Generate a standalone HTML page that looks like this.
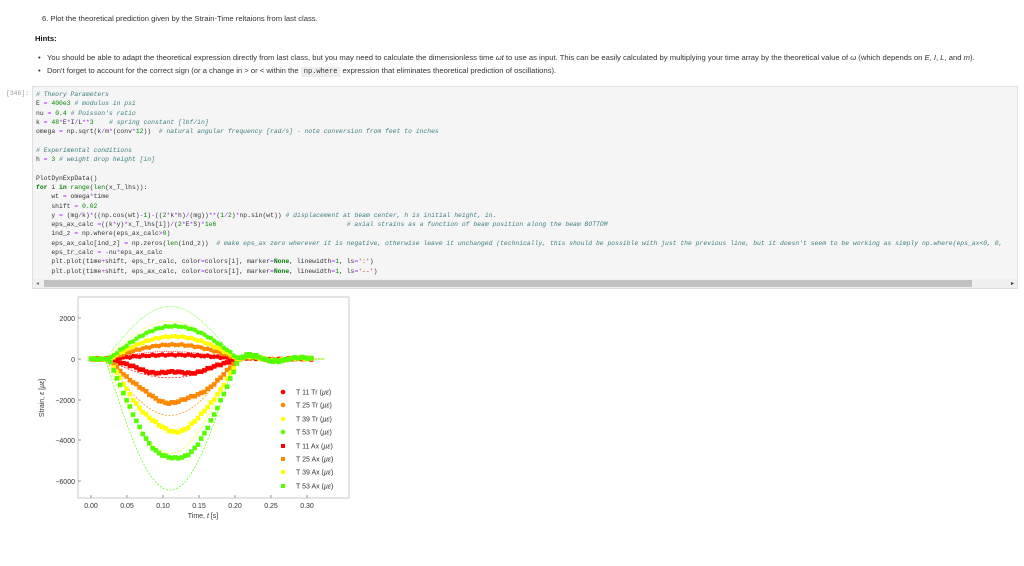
<!DOCTYPE html>
<html><head><meta charset="utf-8">
<style>
body{margin:0;width:1024px;height:566px;background:#fff;position:relative;overflow:hidden;font-family:"Liberation Sans",sans-serif;color:#222}
.t{position:absolute;font-size:7.65px;white-space:nowrap;color:#333}
.code{position:absolute;left:32px;top:86px;width:986px;height:203px;background:#f5f5f5;border:1px solid #e0e0e0;box-sizing:border-box}
pre{margin:0;position:absolute;left:3px;top:3px;font-family:"Liberation Mono",monospace;font-size:6.4px;line-height:9.3px;color:#333}
.c{color:#408080;font-style:italic}.k{color:#008000;font-weight:bold}.n{color:#080}.o{color:#a2f}.b{color:#008000}
.cd{background:#eee;font-family:"Liberation Mono",monospace;padding:1px 3px;font-size:7px}
</style></head><body>
<div class="t" style="left:42px;top:14px">6. Plot the theoretical prediction given by the Strain-Time reltaions from last class.</div>
<div class="t" style="left:35px;top:34px;font-weight:bold;color:#111">Hints:</div>
<div class="t" style="left:38px;top:53px">•&nbsp;&nbsp;&nbsp;You should be able to adapt the theoretical expression directly from last class, but you may need to calculate the dimensionless time <i>ωt</i> to use as input. This can be easily calculated by multiplying your time array by the theoretical value of <i>ω</i> (which depends on <i>E</i>, <i>I</i>, <i>L</i>, and <i>m</i>).</div>
<div class="t" style="left:38px;top:66px">•&nbsp;&nbsp;&nbsp;Don't forget to account for the correct sign (or a change in &gt; or &lt; within the <span class="cd">np.where</span> expression that eliminates theoretical prediction of oscillations).</div>
<div class="t" style="left:6px;top:90px;color:#999;font-family:'Liberation Mono',monospace;font-size:6.4px">[346]:</div>
<div class="code"><pre><span class="c"># Theory Parameters</span>
E <span class="o">=</span> <span class="n">400e3</span> <span class="c"># modulus in psi</span>
nu <span class="o">=</span> <span class="n">0.4</span> <span class="c"># Poisson's ratio</span>
k <span class="o">=</span> <span class="n">48</span><span class="o">*</span>E<span class="o">*</span>I<span class="o">/</span>L<span class="o">**</span><span class="n">3</span>    <span class="c"># spring constant [lbf/in]</span>
omega <span class="o">=</span> np.sqrt(k<span class="o">/</span>m<span class="o">*</span>(conv<span class="o">*</span><span class="n">12</span>))  <span class="c"># natural angular frequency [rad/s] - note conversion from feet to inches</span>

<span class="c"># Experimental conditions</span>
h <span class="o">=</span> <span class="n">3</span> <span class="c"># weight drop height [in]</span>

PlotDynExpData()
<span class="k">for</span> i <span class="k">in</span> <span class="b">range</span>(<span class="b">len</span>(x_T_lhs)):
    wt <span class="o">=</span> omega<span class="o">*</span>time
    shift <span class="o">=</span> <span class="n">0.02</span>
    y <span class="o">=</span> (mg<span class="o">/</span>k)<span class="o">*</span>((np.cos(wt)<span class="o">-</span><span class="n">1</span>)<span class="o">-</span>((<span class="n">2</span><span class="o">*</span>k<span class="o">*</span>h)<span class="o">/</span>(mg))<span class="o">**</span>(<span class="n">1</span><span class="o">/</span><span class="n">2</span>)<span class="o">*</span>np.sin(wt)) <span class="c"># displacement at beam center, h is initial height, in.</span>
    eps_ax_calc <span class="o">=</span>((k<span class="o">*</span>y)<span class="o">*</span>x_T_lhs[i])<span class="o">/</span>(<span class="n">2</span><span class="o">*</span>E<span class="o">*</span>S)<span class="o">*</span><span class="n">1e6</span>                                  <span class="c"># axial strains as a function of beam position along the beam BOTTOM</span>
    ind_z <span class="o">=</span> np.where(eps_ax_calc<span class="o">&gt;</span><span class="n">0</span>)
    eps_ax_calc[ind_z] <span class="o">=</span> np.zeros(<span class="b">len</span>(ind_z))  <span class="c"># make eps_ax zero wherever it is negative, otherwise leave it unchanged (technically, this should be possible with just the previous line, but it doesn't seem to be working as simply np.where(eps_ax&lt;0, 0,</span>
    eps_tr_calc <span class="o">=</span> <span class="o">-</span>nu<span class="o">*</span>eps_ax_calc
    plt.plot(time<span class="o">+</span>shift, eps_tr_calc, color<span class="o">=</span>colors[i], marker<span class="o">=</span><span class="k">None</span>, linewidth<span class="o">=</span><span class="n">1</span>, ls<span class="o">=</span><span style="color:#ba2121">':'</span>)
    plt.plot(time<span class="o">+</span>shift, eps_ax_calc, color<span class="o">=</span>colors[i], marker<span class="o">=</span><span class="k">None</span>, linewidth<span class="o">=</span><span class="n">1</span>, ls<span class="o">=</span><span style="color:#ba2121">'--'</span>)</pre>
<div style="position:absolute;left:0;top:192px;width:984px;height:9px;background:#f0f0f0"></div>
<div style="position:absolute;left:11px;top:193px;width:928px;height:7px;background:#c1c1c1"></div>
<div style="position:absolute;left:3px;top:193px;font-size:6px;color:#777">◂</div>
<div style="position:absolute;left:978px;top:193px;font-size:6px;color:#333">▸</div>
</div>
<svg id="p" width="1024" height="566" style="position:absolute;left:0;top:0" font-family="Liberation Sans, DejaVu Sans, sans-serif" font-size="7" fill="#333">
<g id="data"></g>
<rect x="78" y="297" width="271" height="201" fill="none" stroke="#bbb" stroke-width="0.8"/>
<g stroke="#555" stroke-width="0.6">
<line x1="78" y1="318" x2="81" y2="318"/><line x1="78" y1="359" x2="81" y2="359"/><line x1="78" y1="400" x2="81" y2="400"/><line x1="78" y1="440" x2="81" y2="440"/><line x1="78" y1="481" x2="81" y2="481"/>
<line x1="91" y1="498" x2="91" y2="495"/><line x1="127" y1="498" x2="127" y2="495"/><line x1="163" y1="498" x2="163" y2="495"/><line x1="199" y1="498" x2="199" y2="495"/><line x1="235" y1="498" x2="235" y2="495"/><line x1="271" y1="498" x2="271" y2="495"/><line x1="307" y1="498" x2="307" y2="495"/>
</g>
<g text-anchor="end"><text x="75" y="321">2000</text><text x="75" y="362">0</text><text x="75" y="403">−2000</text><text x="75" y="443">−4000</text><text x="75" y="484">−6000</text></g>
<g text-anchor="middle"><text x="91" y="508">0.00</text><text x="127" y="508">0.05</text><text x="163" y="508">0.10</text><text x="199" y="508">0.15</text><text x="235" y="508">0.20</text><text x="271" y="508">0.25</text><text x="307" y="508">0.30</text>
<text x="203" y="518">Time, <tspan font-style="italic">t</tspan> [s]</text>
<text transform="translate(44,398) rotate(-90)">Strain, <tspan font-style="italic">ε</tspan> [<tspan font-style="italic">µε</tspan>]</text></g>
<g>
<circle cx="283" cy="392" r="2.3" fill="#f00"/><circle cx="283" cy="405" r="2.3" fill="#f80"/><circle cx="283" cy="419" r="2.3" fill="#ff0"/><circle cx="283" cy="432" r="2.3" fill="#5f0"/>
<rect x="281" y="444" width="4" height="4" fill="#f00"/><rect x="281" y="457" width="4" height="4" fill="#f80"/><rect x="281" y="470" width="4" height="4" fill="#ff0"/><rect x="281" y="484" width="4" height="4" fill="#5f0"/>
<text x="296" y="394.5">T 11 Tr (<tspan font-style="italic">µε</tspan>)</text><text x="296" y="407.5">T 25 Tr (<tspan font-style="italic">µε</tspan>)</text><text x="296" y="421.5">T 39 Tr (<tspan font-style="italic">µε</tspan>)</text><text x="296" y="434.5">T 53 Tr (<tspan font-style="italic">µε</tspan>)</text>
<text x="296" y="448.5">T 11 Ax (<tspan font-style="italic">µε</tspan>)</text><text x="296" y="461.5">T 25 Ax (<tspan font-style="italic">µε</tspan>)</text><text x="296" y="474.5">T 39 Ax (<tspan font-style="italic">µε</tspan>)</text><text x="296" y="488.5">T 53 Ax (<tspan font-style="italic">µε</tspan>)</text>
</g>
</svg>
<script>
(function(){
var g=document.getElementById('data'),s='';
function X(t){return 91+t*720}function Y(v){return 359-v*0.0205}
var cols=['#f00','#f80','#ff0','#5f0'],thA=[920,2750,4600,6400],ax=[700,2100,3500,4900],tr=[200,700,1100,1600];
function half(t,a,b){return (t>a&&t<b)?Math.sin(Math.PI*(t-a)/(b-a)):0}
for(var i=0;i<4;i++){
 var d1='',d2='';
 for(var t=0;t<=0.325;t+=0.002){var h=half(t,0.02,0.2);d1+=(t?'L':'M')+X(t).toFixed(1)+' '+Y(-thA[i]*h).toFixed(1);d2+=(t?'L':'M')+X(t).toFixed(1)+' '+Y(0.4*thA[i]*h).toFixed(1);}
 s+='<path d="'+d1+'" fill="none" stroke="'+cols[i]+'" stroke-width="0.7" stroke-dasharray="2,1.5"/>';
 s+='<path d="'+d2+'" fill="none" stroke="'+cols[i]+'" stroke-width="0.7" stroke-dasharray="0.8,1"/>';
}
for(var i=0;i<4;i++){
 for(var t=0;t<=0.307;t+=0.0045){
  var h=half(t,0.025,0.205),w=(t>0.205)?(i+1)*70*Math.sin((t-0.205)*90)*Math.exp(-(t-0.205)*15):0;
  var n=Math.sin(t*900+i)*30;
  var va=-ax[i]*h+w+n+Math.sin(t*1300+i*2)*80*h,vt=tr[i]*h+w*0.6+n;
  s+='<circle cx="'+X(t).toFixed(1)+'" cy="'+Y(vt).toFixed(1)+'" r="2.3" fill="'+cols[i]+'"/>';
  s+='<rect x="'+(X(t)-2.3).toFixed(1)+'" y="'+(Y(va)-2.3).toFixed(1)+'" width="4.6" height="4.6" fill="'+cols[i]+'"/>';
 }
}
g.innerHTML=s;
})();
</script>
</body></html>
